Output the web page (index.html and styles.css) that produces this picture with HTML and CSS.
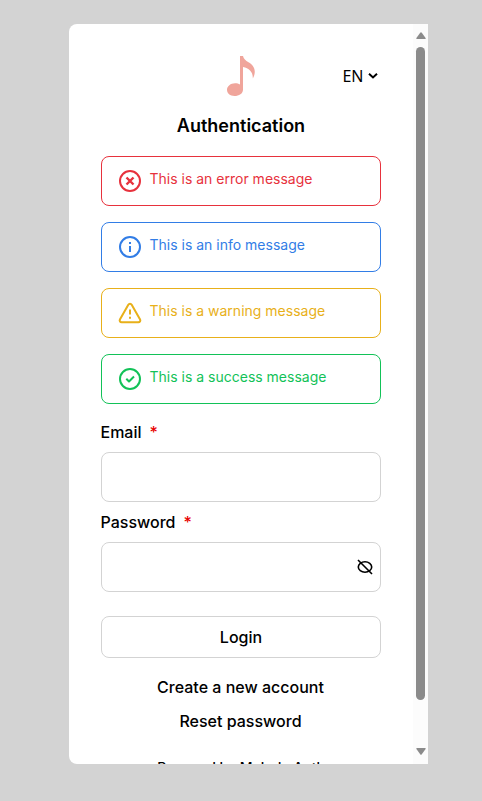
FILE: index.html
```html
<!DOCTYPE html>
<html lang="en">
<head>
<meta charset="utf-8">
<title>Authentication</title>
<link rel="stylesheet" href="styles.css">
</head>
<body>
<main class="card">
  <div class="content">
    <header class="header">
      <svg class="logo" width="30" height="42" viewBox="0 0 30 42"><path fill="#f0a59b" d="M14 1h3c.6 3.100 2.600 4.500 5.500 6.200C28 10.400 31 16 26.800 23.500c.4-6.500-3.800-10.500-9.800-11.500v22.500c0 4.200-4 6.500-8.500 6.500S1 38.500 1 34.800s3.700-6.600 8-6.600c2 0 3.700.5 5 1.300z"/></svg>
      <button class="lang">EN<svg width="10" height="8" viewBox="0 0 10 8"><path d="M1 1.800l4 3.700 4-3.700" fill="none" stroke="currentColor" stroke-width="2"/></svg></button>
    </header>
    <h1 class="title">Authentication</h1>
    <section class="alerts">
      <div class="alert error"><svg class="icon" viewBox="0 0 24 24"><circle cx="12" cy="12" r="10"/><path stroke-linecap="butt" stroke-width="2.400" d="m15.500 8.500-7 7M8.500 8.500l7 7"/></svg><span>This is an error message</span></div>
      <div class="alert info"><svg class="icon" viewBox="0 0 24 24"><circle cx="12" cy="12" r="10"/><path stroke-linecap="butt" d="M12 11v6M12 7v2"/></svg><span>This is an info message</span></div>
      <div class="alert warning"><svg class="icon" viewBox="0 0 24 24"><path d="M10.300 3.700 1.900 18.500a1.900 1.900 0 0 0 1.700 2.800h16.800a1.900 1.900 0 0 0 1.700-2.800L13.700 3.700a1.950 1.950 0 0 0-3.400 0z"/><path stroke-linecap="butt" d="M12 8.500v5M12 15.800v2"/></svg><span>This is a warning message</span></div>
      <div class="alert success"><svg class="icon" viewBox="0 0 24 24"><circle cx="12" cy="12" r="10"/><path stroke-linecap="butt" d="m8.300 11.800 2.700 2.700 5-5"/></svg><span>This is a success message</span></div>
    </section>
    <form class="form">
      <label class="label" for="email">Email<span class="required">*</span></label>
      <div class="field"><input id="email" type="email"></div>
      <label class="label" for="password">Password<span class="required">*</span></label>
      <div class="field"><input id="password" type="password"><svg class="eye" width="16" height="16" viewBox="0 0 16 16"><ellipse cx="8" cy="8" rx="6.700" ry="5.200"/><path d="M1 1l14 14"/></svg></div>
      <button class="login" type="button">Login</button>
    </form>
    <nav class="links"><a>Create a new account</a><a>Reset password</a></nav>
    <footer class="footer">Powered by Melody Auth</footer>
  </div>
  <div class="scrollbar">
    <svg width="10" height="8" viewBox="0 0 10 8"><path d="M4.200.8q.8-1 1.600 0L9.600 6q.6 1-.6 1H1q-1.200 0-.6-1z"/></svg>
    <div class="thumb"></div>
    <svg class="down" width="10" height="8" viewBox="0 0 10 8"><path d="M4.200 6.200q.8 1 1.600 0L9.600 1q.6-1-.6-1H1Q-.2 0 .4 1z"/></svg>
  </div>
</main>
</body>
</html>
```
FILE: styles.css
```css
* { box-sizing: border-box; }
body {
  margin: 0;
  height: 801px;
  padding: 24px 54px 37px 69px;
  overflow: hidden;
  background: #d3d3d3;
  color: #000;
  font: 16px/24px Inter, sans-serif;
}
button { font: inherit; color: inherit; background: none; }
.card {
  display: grid;
  grid-template-columns: 344px 15px;
  height: 740px;
  overflow: hidden;
  border-radius: 8px 0 0 8px;
  background: #fff;
}
.content { padding: 31px 32px 0; height: 740px; overflow: hidden; }
.header {
  display: grid;
  grid-template-columns: 1fr 30px 1fr;
  align-items: center;
  height: 42px;
}
.logo { grid-column: 2; }
.lang {
  display: flex;
  align-items: center;
  justify-self: end;
  gap: 4px;
  padding: 0;
  margin-right: 3.5px;
  border: 0;
  font-family: "Noto Sans", sans-serif;
}
.title { margin: 15px 0 16px; font-size: 18px; line-height: 28px; font-weight: 600; text-align: center; }
.alerts { display: grid; gap: 16px; }
.alert {
  display: flex;
  align-items: center;
  gap: 7.5px;
  height: 50px;
  padding: 0 16px;
  border: 1px solid currentColor;
  border-radius: 8px;
  font-size: 14px;
  line-height: 20px;
}
.alert span { margin-top: -5px; }
.error { color: #e7323d; }
.info { color: #327de6; }
.warning { color: #e8b01a; }
.success { color: #12c258; }
.icon {
  width: 24px;
  height: 24px;
  fill: none;
  stroke: currentColor;
  stroke-width: 2;
  stroke-linecap: round;
  stroke-linejoin: round;
}
.form { margin-top: 16px; }
.label { display: block; height: 32px; margin-left: -0.5px; font-weight: 500; }
.required { margin-left: 8px; color: #e80000; }
.field {
  display: flex;
  align-items: center;
  height: 50px;
  margin-bottom: 8px;
  padding-right: 7px;
  border: 1px solid #d3d3d3;
  border-radius: 8px;
}
.field input { flex: 1; min-width: 0; height: 100%; padding: 0 16px; border: 0; outline: 0; background: none; }
.eye { fill: none; stroke: #000; stroke-width: 1.600; }
.login {
  display: block;
  width: 100%;
  height: 42px;
  margin-top: 24px;
  border: 1px solid #d3d3d3;
  border-radius: 8px;
  font-weight: 500;
}
.links { display: grid; gap: 10px; margin: 17px 1px 0 0; text-align: center; font-weight: 500; }
.footer { margin-top: 23px; font-size: 14px; font-weight: 500; text-align: center; }
.scrollbar {
  display: flex;
  flex-direction: column;
  align-items: center;
  padding: 8px 0;
  background: #fcfcfc;
}
.scrollbar svg { fill: #8b8b8b; }
.thumb { width: 9px; height: 653px; margin-top: 7px; border-radius: 5px; background: #8b8b8b; }
.down { margin-top: auto; }
```
